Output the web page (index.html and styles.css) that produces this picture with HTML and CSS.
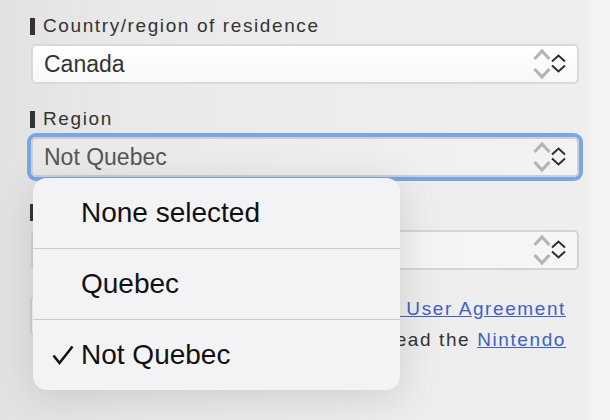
FILE: index.html
```html
<!DOCTYPE html>
<html lang="en">
<head>
<meta charset="utf-8">
<title>Region</title>
<link rel="stylesheet" href="styles.css">
</head>
<body>
<div class="page">
  <form class="form">
    <div class="field">
      <div class="label"><span class="bar"></span><span>Country/region of residence</span></div>
      <div class="select">
        <span class="value">Canada</span>
        <svg class="chev" viewBox="0 0 36 34" width="36" height="34" aria-hidden="true">
          <polyline class="chev-big" points="2.5,12 10,4 17.5,12"/>
          <polyline class="chev-big" points="2.5,22 10,30 17.5,22"/>
          <polyline class="chev-small" points="20,14.5 26.5,8.5 33,14.5"/>
          <polyline class="chev-small" points="20,18.5 26.5,24.5 33,18.5"/>
        </svg>
      </div>
    </div>
    <div class="field">
      <div class="label"><span class="bar"></span><span>Region</span></div>
      <div class="select select-focused">
        <span class="value value-muted">Not Quebec</span>
        <svg class="chev" viewBox="0 0 36 34" width="36" height="34" aria-hidden="true">
          <polyline class="chev-big" points="2.5,12 10,4 17.5,12"/>
          <polyline class="chev-big" points="2.5,22 10,30 17.5,22"/>
          <polyline class="chev-small" points="20,14.5 26.5,8.5 33,14.5"/>
          <polyline class="chev-small" points="20,18.5 26.5,24.5 33,18.5"/>
        </svg>
      </div>
    </div>
    <div class="field">
      <div class="label"><span class="bar"></span></div>
      <div class="select select-soft">
        <svg class="chev" viewBox="0 0 36 34" width="36" height="34" aria-hidden="true">
          <polyline class="chev-big" points="2.5,12 10,4 17.5,12"/>
          <polyline class="chev-big" points="2.5,22 10,30 17.5,22"/>
          <polyline class="chev-small" points="20,14.5 26.5,8.5 33,14.5"/>
          <polyline class="chev-small" points="20,18.5 26.5,24.5 33,18.5"/>
        </svg>
      </div>
    </div>
    <div class="agree">
      <span class="checkbox"></span>
      <p class="agree-text">I accept the <a href="#">Nintendo Account User Agreement</a><br>and I have read the <a href="#">Nintendo</a></p>
    </div>
  </form>

  <div class="popup" role="listbox">
    <div class="option"><span class="check"></span><span>None selected</span></div>
    <div class="option"><span class="check"></span><span>Quebec</span></div>
    <div class="option option-selected">
      <span class="check">
        <svg viewBox="0 0 22 20" width="22" height="20" aria-hidden="true"><polyline points="1.5,10.5 7.5,18 20.5,1.5"/></svg>
      </span>
      <span>Not Quebec</span>
    </div>
  </div>
</div>
</body>
</html>
```

FILE: styles.css
```css
html, body {
  margin: 0;
  padding: 0;
}

body {
  width: 610px;
  height: 420px;
  overflow: hidden;
  font-family: "Liberation Sans", Arial, sans-serif;
  background: linear-gradient(90deg, #e2e2e2 0%, #e9e9e9 20%, #ededed 60%, #eeeeee 96%, #f3f3f3 97%, #f3f3f3 100%);
}

.page {
  position: relative;
  height: 420px;
}

.form {
  display: flex;
  flex-direction: column;
  gap: 23px;
  padding: 14px 31px 0 30px;
  margin: 0;
}

.label {
  display: flex;
  align-items: center;
  gap: 8px;
  height: 24px;
  margin-bottom: 6px;
  color: #333;
  font-size: 19px;
  letter-spacing: 1.6px;
  white-space: nowrap;
}

.bar {
  flex: none;
  width: 5px;
  height: 17px;
  background: #333;
}

.select {
  display: flex;
  align-items: center;
  box-sizing: border-box;
  height: 40px;
  margin-left: 1px;
  padding: 0 9px 0 11px;
  border: 2px solid #d9d9d9;
  border-radius: 5px;
  background: linear-gradient(#ffffff, #f8f8f8);
  color: #333;
  font-size: 23px;
}

.select-focused {
  border-color: #cfcfcf;
  background: linear-gradient(90deg, #e9e9e9, #eeeeee 60%, #f3f3f3);
  box-shadow: 0 0 0 4px #78a6e7;
}

.select-soft {
  border-color: #d4d4d4;
  background: linear-gradient(90deg, #efefef, #f6f6f6);
}

.value-muted {
  color: #555;
}

.chev {
  flex: none;
  margin-left: auto;
}

.chev-big {
  fill: none;
  stroke: #b4b4b4;
  stroke-width: 3.2;
}

.chev-small {
  fill: none;
  stroke: #2e2e2e;
  stroke-width: 2;
}

.agree {
  display: flex;
  align-items: flex-start;
}

.checkbox {
  flex: none;
  box-sizing: border-box;
  width: 40px;
  height: 40px;
  margin-top: 3px;
  border: 2px solid #d3d3d3;
  border-radius: 5px;
  background: #f6f6f6;
}

.agree-text {
  flex: 1;
  margin: 0 13px 0 10px;
  color: #333;
  font-size: 19px;
  letter-spacing: 1.6px;
  line-height: 31px;
  text-align: right;
  white-space: nowrap;
}

.agree-text a {
  color: #3f5fc7;
  text-decoration: underline;
}

.popup {
  position: absolute;
  left: 33px;
  top: 178px;
  display: flex;
  flex-direction: column;
  width: 367px;
  height: 212px;
  overflow: hidden;
  border-radius: 14px;
  background: #f3f3f5;
  box-shadow: 0 8px 40px rgba(0, 0, 0, 0.13);
  color: #111;
  font-size: 28px;
}

.option {
  flex: 1;
  display: flex;
  align-items: center;
  padding-left: 19px;
}

.option + .option {
  border-top: 1px solid #c9c9cb;
}

.check {
  flex: none;
  display: flex;
  align-items: center;
  width: 29px;
}

.check svg polyline {
  fill: none;
  stroke: #111;
  stroke-width: 2.5;
  stroke-linejoin: miter;
}
```
